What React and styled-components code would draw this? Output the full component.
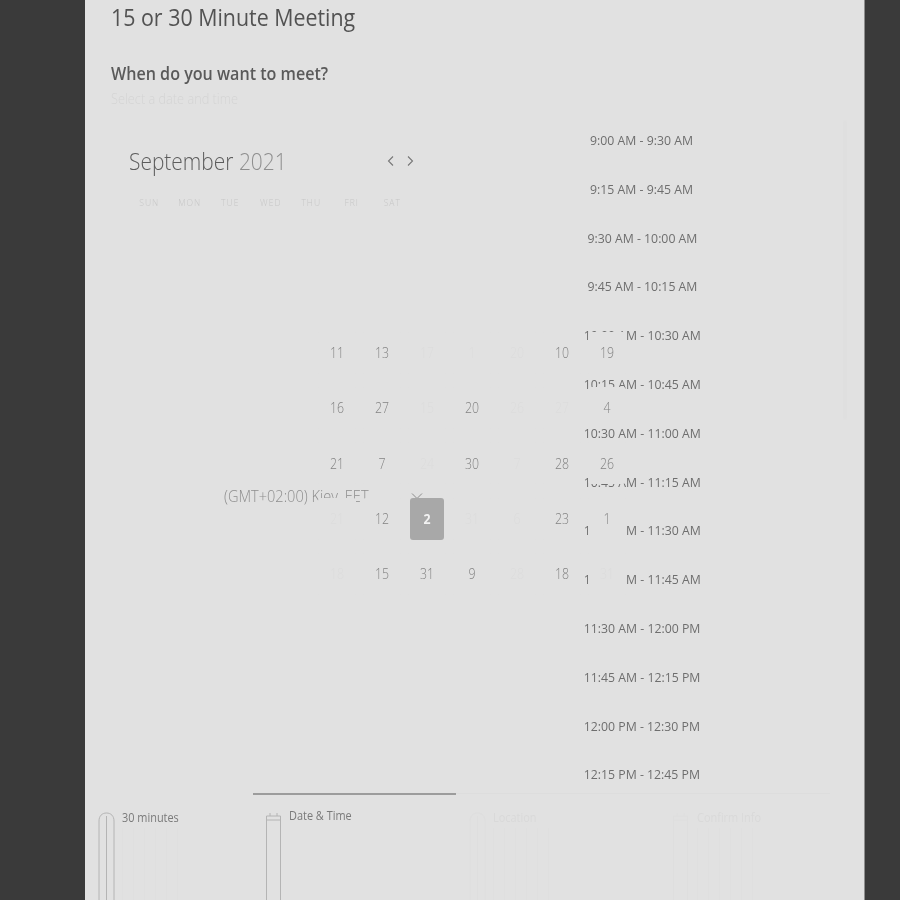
import React from "react";
import styled, { createGlobalStyle, css } from "styled-components";

const times = [
  "9:00 AM - 9:30 AM",
  "9:15 AM - 9:45 AM",
  "9:30 AM - 10:00 AM",
  "9:45 AM - 10:15 AM",
  "10:00 AM - 10:30 AM",
  "10:15 AM - 10:45 AM",
  "10:30 AM - 11:00 AM",
  "10:45 AM - 11:15 AM",
  "11:00 AM - 11:30 AM",
  "11:15 AM - 11:45 AM",
  "11:30 AM - 12:00 PM",
  "11:45 AM - 12:15 PM",
  "12:00 PM - 12:30 PM",
  "12:15 PM - 12:45 PM",
];

const weekdays = ["SUN", "MON", "TUE", "WED", "THU", "FRI", "SAT"];

// f = barely visible day (disabled)
const days = [
  ["11"], ["13"], ["17", "f"], ["1", "f"], ["20", "f"], ["10"], ["19"],
  ["16"], ["27"], ["15", "f"], ["20"], ["26", "f"], ["27", "f"], ["4"],
  ["21"], ["7"], ["24", "f"], ["30"], ["7", "f"], ["28"], ["26"],
  ["21", "f"], ["12"], ["2", "s"], ["31", "f"], ["6", "f"], ["23"], ["1"],
  ["18", "f"], ["15"], ["31"], ["9"], ["28", "f"], ["18"], ["31", "f"],
];

// the screenshot's type runs about 10% narrower than Open Sans
const narrow = css`
  transform: scaleX(0.91);
  transform-origin: left center;
`;

const GlobalStyle = createGlobalStyle`
  html, body {
    margin: 0;
    height: 900px;
    overflow: hidden;
    background: #3a3a3a;
    font-family: "Open Sans", "Noto Sans", sans-serif;
  }
`;

const Page = styled.div`
  width: 900px;
  height: 900px;
  padding-left: 85px;
  box-sizing: border-box;
  filter: blur(0.5px);
`;

const Card = styled.main`
  width: 780px;
  height: 900px;
  background: #e1e1e1;
  border-right: 1px solid #8f8f8f;
  box-sizing: border-box;
  display: flex;
  flex-direction: column;
  overflow: hidden;
`;

const Header = styled.header`
  padding-left: 26px;
  height: 120px;
  flex: none;
`;

const Title = styled.h1`
  ${narrow}
  margin: 0;
  font-size: 23.5px;
  line-height: 35px;
  font-weight: 400;
  color: #525252;
`;

const Question = styled.h2`
  ${narrow}
  margin: 26px 0 0;
  font-size: 17.7px;
  line-height: 24px;
  font-weight: 600;
  color: #5a5a5a;
`;

const Hint = styled.p`
  ${narrow}
  margin: 4px 0 0;
  font-size: 14px;
  line-height: 20px;
  font-weight: 300;
  color: #d4d4d4;
`;

const Body = styled.section`
  display: flex;
  height: 673px;
  flex: none;
  padding-left: 26px;
  overflow: hidden;
`;

const CalendarPane = styled.div`
  position: relative;
  width: 440px;
  flex: none;
  padding: 25px 0 0 18px;
  box-sizing: border-box;
`;

const MonthRow = styled.div`
  display: flex;
  align-items: center;
  width: 285px;
  height: 32px;
`;

const Month = styled.div`
  ${narrow}
  font-size: 23px;
  line-height: 32px;
  font-weight: 300;
  color: #5c5c5c;
  flex: 1;
  span {
    color: #8f8f8f;
  }
`;

const Arrow = styled.svg`
  width: 8px;
  height: 12px;
  margin-left: 11px;
  fill: none;
  stroke: #777777;
  stroke-width: 1.1;
`;

const Weekdays = styled.div`
  display: grid;
  grid-template-columns: repeat(7, 40.5px);
  margin-top: 20px;
`;

const Weekday = styled.div`
  text-align: center;
  font-size: 8.5px;
  line-height: 12px;
  letter-spacing: 1px;
  font-weight: 300;
  color: #c6c6c6;
`;

const TimeZone = styled.div`
  display: flex;
  align-items: center;
  margin: 275px 0 0 95px;
  height: 24px;
  font-size: 16px;
  font-weight: 300;
  color: #8d8d8d;
  white-space: nowrap;
`;

const ZoneName = styled.span`
  ${narrow}
`;

const ZoneChevron = styled.svg`
  width: 12px;
  height: 8px;
  margin-left: 28px;
  fill: none;
  stroke: #8d8d8d;
  stroke-width: 1;
`;

const DayGrid = styled.div`
  position: absolute;
  left: 203.5px;
  top: 205px;
  display: grid;
  grid-template-columns: repeat(7, 45px);
  grid-auto-rows: 55.3px;
  z-index: 2;
`;

const Day = styled.div`
  width: ${(p) => (p.$kind === "s" ? "34px" : "38px")};
  height: 42px;
  justify-self: center;
  align-self: center;
  border-radius: 3px;
  display: flex;
  align-items: center;
  justify-content: center;
  font-size: 14px;
  font-weight: ${(p) => (p.$kind === "s" ? 700 : 300)};
  color: ${(p) =>
    p.$kind === "s" ? "#f2f2f2" : p.$kind === "f" ? "#dcdcdc" : "#838383"};
  background: ${(p) => (p.$kind === "s" ? "#a8a8a8" : "#e1e1e1")};
`;

const DayNumber = styled.span`
  transform: scaleX(0.88);
`;

const TimeList = styled.div`
  width: 182px;
  flex: none;
  padding-top: 8px;
  display: flex;
  flex-direction: column;
  align-items: center;
`;

const TimeSlot = styled.div`
  height: 48.8px;
  flex: none;
  font-size: 13.5px;
  line-height: 24px;
  color: #6e6e6e;
  white-space: nowrap;
  transform: scaleX(0.91);
`;

const ScrollTrack = styled.div`
  width: 4px;
  height: 300px;
  margin: 0 0 0 110px;
  background: #dfdfdf;
  border-radius: 2px;
`;

const Footer = styled.nav`
  display: grid;
  grid-template-columns: 168px 203px 204px 170px;
  height: 107px;
`;

const Tab = styled.div`
  display: flex;
  gap: ${(p) => (p.$active ? "6px" : "7px")};
  padding: ${(p) => (p.$active ? "17px" : "18px")} 0 0 13px;
  border-top: ${(p) => (p.$active ? "2px solid #9c9c9c" : "1px solid #dddddd")};
  border-top-color: ${(p) => p.$first && "#e1e1e1"};
  color: ${(p) => (p.$faint ? "#d9d9d9" : "#7a7a7a")};
  font-size: 12px;
  line-height: 16px;
  box-sizing: border-box;
`;

const StepIcon = styled.svg`
  width: 17px;
  height: 90px;
  flex: none;
  fill: none;
  stroke: ${(p) => (p.$faint ? "#dedede" : "#b4b4b4")};
  stroke-width: 1;
`;

const StepText = styled.div`
  display: flex;
  flex-direction: column;
  flex: 1;
  margin-top: ${(p) => p.$lift || "-2px"};
`;

const StepLabel = styled.span`
  ${narrow}
`;

const Ghost = styled.div`
  width: 58px;
  flex: 1;
  margin-top: 2px;
  background: repeating-linear-gradient(
    90deg,
    #dfdfdf 0 1px,
    transparent 1px 11px
  );
`;

const ClockIcon = ({ faint }) => (
  <StepIcon $faint={faint} viewBox="0 0 17 90" preserveAspectRatio="none">
    <path d="M1 90V9C1 4 4 1 8.500 1S16 4 16 9V90" />
    <path d="M8.500 4V90" />
  </StepIcon>
);

const CalendarIcon = ({ faint }) => (
  <StepIcon $faint={faint} viewBox="0 0 17 90" preserveAspectRatio="none">
    <path d="M0.500 90V4H14.500V90" />
    <path d="M0.500 8H14.500M4 1V4M11 1V4" />
  </StepIcon>
);

export default function App() {
  return (
    <>
      <GlobalStyle />
      <Page>
        <Card>
          <Header>
            <Title>15 or 30 Minute Meeting</Title>
            <Question>When do you want to meet?</Question>
            <Hint>Select a date and time</Hint>
          </Header>
          <Body>
            <CalendarPane>
              <MonthRow>
                <Month>
                  September <span>2021</span>
                </Month>
                <Arrow viewBox="0 0 8 12">
                  <path d="M6 1.500 1.500 6 6 10.500" />
                </Arrow>
                <Arrow viewBox="0 0 8 12">
                  <path d="M2 1.500 6.500 6 2 10.500" />
                </Arrow>
              </MonthRow>
              <Weekdays>
                {weekdays.map((d) => (
                  <Weekday key={d}>{d}</Weekday>
                ))}
              </Weekdays>
              <TimeZone>
                <ZoneName>(GMT+02:00) Kiev, EET</ZoneName>
                <ZoneChevron viewBox="0 0 12 8">
                  <path d="M1 1.500 6 6.500 11 1.500" />
                </ZoneChevron>
              </TimeZone>
              <DayGrid>
                {days.map(([n, kind], i) => (
                  <Day key={i} $kind={kind}>
                    <DayNumber>{n}</DayNumber>
                  </Day>
                ))}
              </DayGrid>
            </CalendarPane>
            <TimeList>
              {times.map((t) => (
                <TimeSlot key={t}>{t}</TimeSlot>
              ))}
            </TimeList>
            <ScrollTrack />
          </Body>
          <Footer>
            <Tab $first>
              <ClockIcon />
              <StepText>
                <StepLabel>30 minutes</StepLabel>
                <Ghost />
              </StepText>
            </Tab>
            <Tab $active>
              <CalendarIcon />
              <StepText $lift="-4px">
                <StepLabel>Date &amp; Time</StepLabel>
              </StepText>
            </Tab>
            <Tab $faint>
              <ClockIcon faint />
              <StepText>
                <StepLabel>Location</StepLabel>
                <Ghost />
              </StepText>
            </Tab>
            <Tab $faint>
              <CalendarIcon faint />
              <StepText>
                <StepLabel>Confirm Info</StepLabel>
                <Ghost />
              </StepText>
            </Tab>
          </Footer>
        </Card>
      </Page>
    </>
  );
}
